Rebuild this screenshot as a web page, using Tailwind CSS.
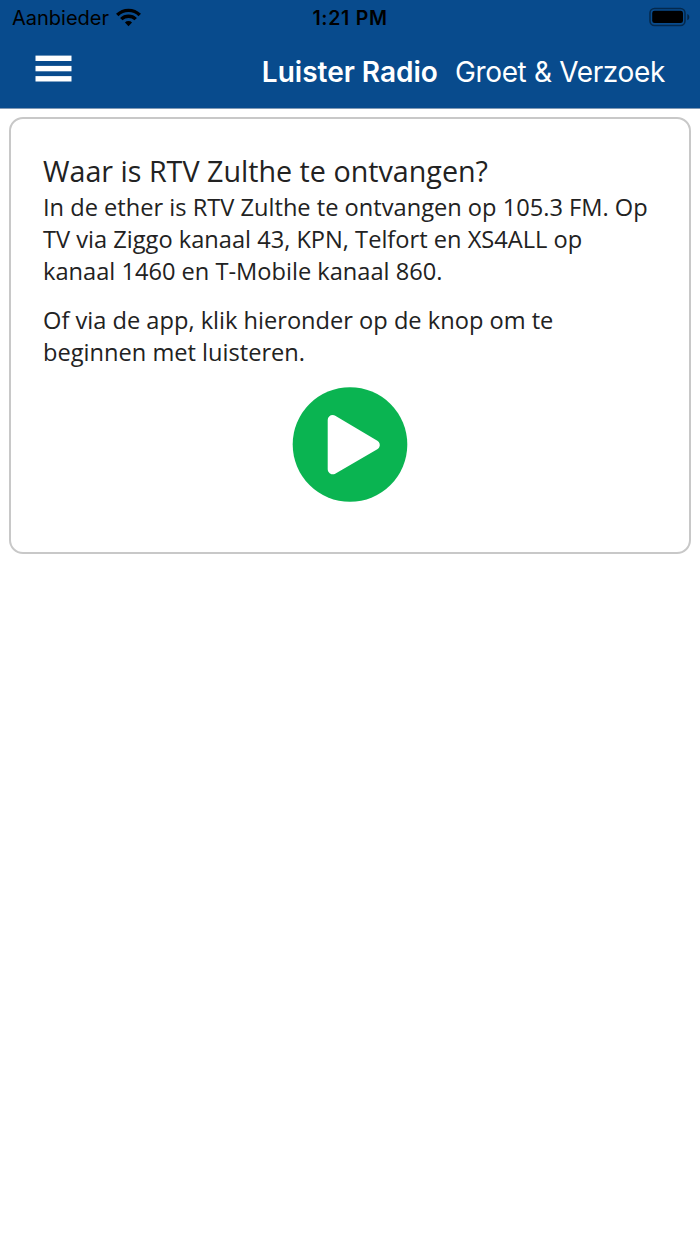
<!DOCTYPE html>
<html lang="nl">
<head>
    <meta charset="UTF-8">
    <meta name="viewport" content="width=device-width, initial-scale=1.0">
    <title>RTV Zulthe</title>

    <script src="https://cdn.jsdelivr.net/npm/@tailwindcss/browser@4"></script>
</head>
<body class="bg-white min-h-screen font-['Inter',sans-serif]">

    <header class="h-[109px] bg-[#084b8d] border-b border-[#8199b5]">
        <!-- Status bar -->
        <div class="grid grid-cols-3 items-center h-9 px-[11px] text-black">
            <div class="flex items-center gap-[7px] pl-px">
                <span class="text-[20px] leading-9">Aanbieder</span>
                <svg class="w-[25px] h-[19px] -mt-0.5" viewBox="0 0 26 19" fill="none" stroke="#000" stroke-width="3.6">
                    <path d="M1.3 6.9a16.6 16.6 0 0 1 23.4 0"/>
                    <path d="M5.5 11.2a10.6 10.6 0 0 1 15 0"/>
                    <path d="M13 18.6l-3.7-3.8a5.2 5.2 0 0 1 7.4 0z" fill="#000" stroke="none"/>
                </svg>
            </div>
            <span class="text-center text-[19.5px] leading-9 font-semibold tracking-[0.7px]">1:21 PM</span>
            <svg class="justify-self-end w-[41px] h-5 -mr-px -mt-[3px]" viewBox="0 0 41 20">
                <rect x="1" y="1.5" width="35" height="17" rx="4.5" fill="none" stroke="#000" stroke-opacity=".45" stroke-width="1.6"/>
                <rect x="3.2" y="3.7" width="30.8" height="12.4" rx="2.4" fill="#000"/>
                <path d="M38.3 7c2.7 1 2.7 5.2 0 6.2z" fill="#000" fill-opacity=".5"/>
            </svg>
        </div>

        <!-- Navigation -->
        <nav class="flex items-center justify-between h-[72px] px-[35px] text-white">
            <button type="button" aria-label="Menu" class="-mt-2">
                <svg class="block w-[37px] h-[27px]" viewBox="0 0 37 27" fill="#fff">
                    <rect x="0.5" y="0.6" width="36" height="5.4"/>
                    <rect x="0.5" y="10.9" width="36" height="5.4"/>
                    <rect x="0.5" y="21.1" width="36" height="5.4"/>
                </svg>
            </button>
            <div class="flex gap-[17px] text-[28px] leading-[70px]">
                <a href="#" class="font-semibold">Luister Radio</a>
                <a href="#" class="tracking-[-0.35px]">Groet &amp; Verzoek</a>
            </div>
        </nav>
    </header>

    <main class="mt-2 mx-[9px] h-[437px] border-2 border-[#c8c8c8] rounded-[14px] pt-[34px] pl-8 pr-6 text-[#222] font-['Open_Sans',sans-serif]">
        <h1 class="text-[28.7px] leading-9">Waar is RTV Zulthe te ontvangen?</h1>
        <p class="mt-0.5 text-[23.63px] leading-8">
            In de ether is RTV Zulthe te ontvangen op 105.3 FM. Op<br>
            TV via Ziggo kanaal 43, KPN, Telfort en XS4ALL op<br>
            kanaal 1460 en T-Mobile kanaal 860.
        </p>
        <p class="mt-[17px] text-[23.63px] leading-8">
            Of via de app, klik hieronder op de knop om te<br>
            beginnen met luisteren.
        </p>
        <button type="button" aria-label="Luister" class="block ml-[249px] mt-[18px]">
            <svg class="w-[116px] h-[116px]" viewBox="0 0 116 116">
                <circle cx="58" cy="58.5" r="57.3" fill="#0ab451"/>
                <path d="M40.7 34L82.8 59L40.7 83.3z" fill="#fff" stroke="#fff" stroke-width="10" stroke-linejoin="round"/>
            </svg>
        </button>
    </main>

</body>
</html>
